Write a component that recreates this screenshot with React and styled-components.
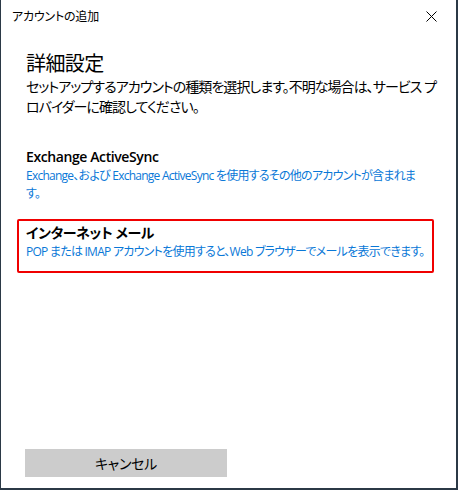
import React from 'react';
import styled, {createGlobalStyle} from 'styled-components';

const GlobalStyle = createGlobalStyle`
  html, body {
    margin: 0;
    padding: 0;
    background: #fff;
  }
  * {
    box-sizing: border-box;
  }
`;

const Window = styled.div`
  width: 458px;
  height: 490px;
  display: flex;
  flex-direction: column;
  background: #fff;
  border-left: 1px solid #2b3946;
  border-right: 2px solid #2b3946;
  border-bottom: 2px solid #2b3946;
  font-family: "Open Sans", "Noto Sans CJK JP", sans-serif;
  font-feature-settings: "palt";
  color: #000;
`;

const TitleBar = styled.div`
  height: 32px;
  display: flex;
  align-items: center;
  justify-content: space-between;
  padding: 0 18px 0 11px;
`;

const TitleText = styled.span`
  font-size: 12px;
  letter-spacing: -0.2px;
`;

const CloseButton = styled.button`
  width: 14px;
  height: 14px;
  padding: 0;
  border: none;
  background: none;
  display: flex;
  align-items: center;
  justify-content: center;
`;

const Content = styled.div`
  flex: 1;
  display: flex;
  flex-direction: column;
  padding: 19px 22px 0 16px;
`;

const Heading = styled.h1`
  margin: 0 0 0 9px;
  font-size: 20px;
  font-weight: 400;
  line-height: 26px;
  letter-spacing: -0.6px;
`;

const Description = styled.p`
  margin: 0 -8px 26px 9px;
  font-size: 14px;
  line-height: 20px;
  letter-spacing: -0.95px;
`;

const OptionList = styled.div`
  display: flex;
  flex-direction: column;
  gap: 4px;
`;

const Option = styled.div`
  padding: 2px 7px 10px 7px;
  border: 2px solid ${p => (p.$selected ? '#f00000' : 'transparent')};
  border-radius: 2px;
`;

const OptionTitle = styled.div`
  font-size: 14px;
  font-weight: 600;
  line-height: 20px;
  letter-spacing: -0.4px;
`;

const OptionText = styled.div`
  font-size: 12px;
  line-height: 18px;
  letter-spacing: -0.75px;
  color: #0a78d7;
`;

const Footer = styled.div`
  padding: 0 0 11px 24px;
`;

const CancelButton = styled.button`
  width: 202px;
  height: 28px;
  border: none;
  background: #cccccc;
  font-family: inherit;
  font-feature-settings: "palt";
  font-size: 14px;
  letter-spacing: -0.3px;
  color: #000;
`;

const options = [
  {
    title: 'Exchange ActiveSync',
    text: 'Exchange、および Exchange ActiveSync を使用するその他のアカウントが含まれます。',
  },
  {
    title: 'インターネット メール',
    text: 'POP または IMAP アカウントを使用すると、Web ブラウザーでメールを表示できます。',
    selected: true,
  },
];

const App = () => {
  return (
    <>
      <GlobalStyle/>
      <Window>
        <TitleBar>
          <TitleText>アカウントの追加</TitleText>
          <CloseButton aria-label="閉じる">
            <svg width="11" height="11" viewBox="0 0 11 11">
              <path d="M0.5 0.5 L10.5 10.5 M10.5 0.5 L0.5 10.5" stroke="#000" strokeWidth="1" fill="none"/>
            </svg>
          </CloseButton>
        </TitleBar>
        <Content>
          <Heading>詳細設定</Heading>
          <Description>
            セットアップするアカウントの種類を選択します。不明な場合は、サービス プロバイダーに確認してください。
          </Description>
          <OptionList>
            {options.map(o => (
              <Option key={o.title} $selected={o.selected}>
                <OptionTitle>{o.title}</OptionTitle>
                <OptionText>{o.text}</OptionText>
              </Option>
            ))}
          </OptionList>
        </Content>
        <Footer>
          <CancelButton>キャンセル</CancelButton>
        </Footer>
      </Window>
    </>
  );
};

export default App;
